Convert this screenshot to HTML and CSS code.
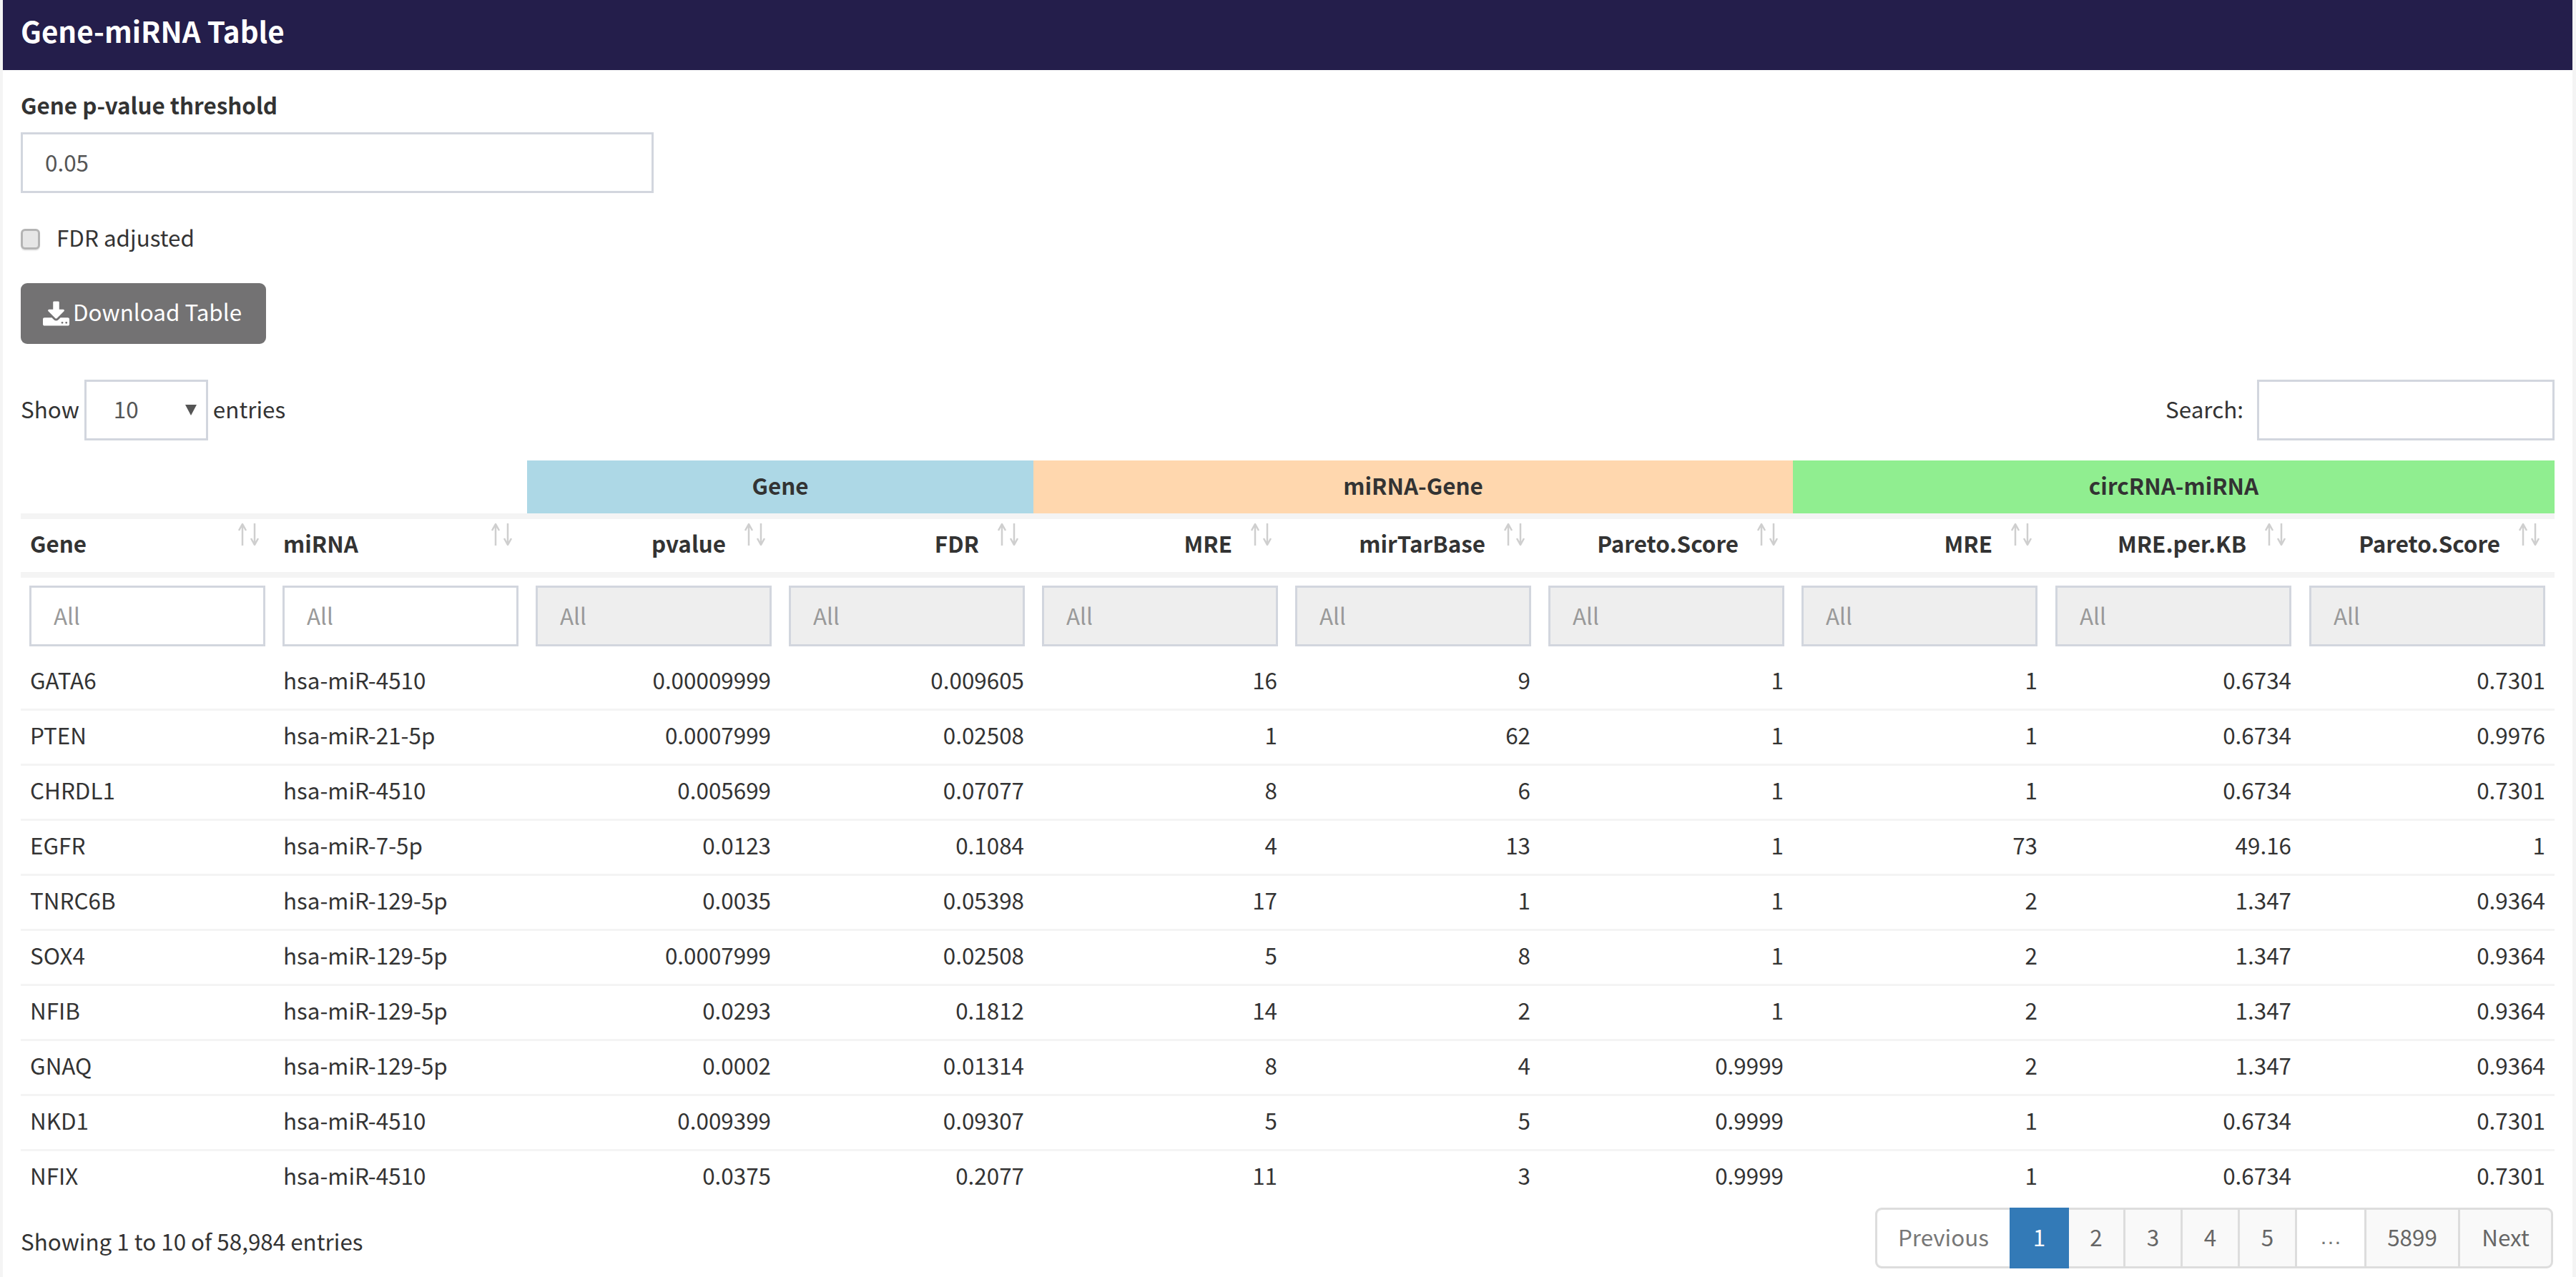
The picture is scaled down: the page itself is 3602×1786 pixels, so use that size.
FILE: index.html
```html
<!DOCTYPE html>
<html lang="en">
<head>
    <meta charset="UTF-8">
    <title>Gene-miRNA Table</title>
    <link rel="stylesheet" href="styles.css">
</head>
<body>
<div class="box">
    <div class="box-header">Gene-miRNA Table</div>
    <div class="box-body">
        <label class="field-label" for="threshold">Gene p-value threshold</label>
        <input class="form-input threshold" id="threshold" type="text" value="0.05">
        <label class="check-row"><input class="check" type="checkbox"><span class="check-text">FDR adjusted</span></label>
        <button class="download-btn">
            <svg class="download-icon" viewBox="64 0 1664 1536"><path fill="#fff" d="M1344 1344q0-26-19-45t-45-19-45 19-19 45 19 45 45 19 45-19 19-45zm256 0q0-26-19-45t-45-19-45 19-19 45 19 45 45 19 45-19 19-45zm128-224v320q0 40-28 68t-68 28h-1472q-40 0-68-28t-28-68v-320q0-40 28-68t68-28h465l135 136q58 56 136 56t136-56l136-136h464q40 0 68 28t28 68zm-325-569q17 41-14 70l-448 448q-18 19-45 19t-45-19l-448-448q-31-29-14-70 17-39 59-39h256v-448q0-26 19-45t45-19h256q26 0 45 19t19 45v448h256q42 0 59 39z"/></svg>
            Download Table
        </button>

        <div class="toolbar">
            <div class="length">
                <span class="toolbar-text">Show</span>
                <span class="select-wrap">
                    <select class="length-select"><option>10</option><option>25</option><option>50</option></select>
                </span>
                <span class="toolbar-text">entries</span>
            </div>
            <div class="search"><span class="toolbar-text">Search:</span> <input class="form-input search-input" type="search"></div>
        </div>

        <table class="data-table">
            <colgroup>
                <col class="col-a"><col class="col-a"><col class="col-a"><col class="col-a"><col class="col-a"><col class="col-a"><col class="col-a">
                <col class="col-b"><col class="col-b"><col class="col-b">
            </colgroup>
            <thead>
                <tr class="group-row">
                    <th colspan="2"></th>
                    <th colspan="2" class="group-gene">Gene</th>
                    <th colspan="3" class="group-mirna">miRNA-Gene</th>
                    <th colspan="3" class="group-circ">circRNA-miRNA</th>
                </tr>
                <tr class="head-row">
                    <th class="sort">Gene<svg class="sort-icon" viewBox="0 0 30 31"><path d="M6 31V1M1 10L6 1l5 9M23 0v30M18 21l5 9 5-9"/></svg></th>
                    <th class="sort">miRNA<svg class="sort-icon" viewBox="0 0 30 31"><path d="M6 31V1M1 10L6 1l5 9M23 0v30M18 21l5 9 5-9"/></svg></th>
                    <th class="sort num">pvalue<svg class="sort-icon" viewBox="0 0 30 31"><path d="M6 31V1M1 10L6 1l5 9M23 0v30M18 21l5 9 5-9"/></svg></th>
                    <th class="sort num">FDR<svg class="sort-icon" viewBox="0 0 30 31"><path d="M6 31V1M1 10L6 1l5 9M23 0v30M18 21l5 9 5-9"/></svg></th>
                    <th class="sort num">MRE<svg class="sort-icon" viewBox="0 0 30 31"><path d="M6 31V1M1 10L6 1l5 9M23 0v30M18 21l5 9 5-9"/></svg></th>
                    <th class="sort num">mirTarBase<svg class="sort-icon" viewBox="0 0 30 31"><path d="M6 31V1M1 10L6 1l5 9M23 0v30M18 21l5 9 5-9"/></svg></th>
                    <th class="sort num">Pareto.Score<svg class="sort-icon" viewBox="0 0 30 31"><path d="M6 31V1M1 10L6 1l5 9M23 0v30M18 21l5 9 5-9"/></svg></th>
                    <th class="sort num">MRE<svg class="sort-icon" viewBox="0 0 30 31"><path d="M6 31V1M1 10L6 1l5 9M23 0v30M18 21l5 9 5-9"/></svg></th>
                    <th class="sort num">MRE.per.KB<svg class="sort-icon" viewBox="0 0 30 31"><path d="M6 31V1M1 10L6 1l5 9M23 0v30M18 21l5 9 5-9"/></svg></th>
                    <th class="sort num">Pareto.Score<svg class="sort-icon" viewBox="0 0 30 31"><path d="M6 31V1M1 10L6 1l5 9M23 0v30M18 21l5 9 5-9"/></svg></th>
                </tr>
                <tr class="filter-row">
                    <td><input class="form-input filter" type="search" placeholder="All"></td>
                    <td><input class="form-input filter" type="search" placeholder="All"></td>
                    <td><input class="form-input filter" type="search" placeholder="All" disabled></td>
                    <td><input class="form-input filter" type="search" placeholder="All" disabled></td>
                    <td><input class="form-input filter" type="search" placeholder="All" disabled></td>
                    <td><input class="form-input filter" type="search" placeholder="All" disabled></td>
                    <td><input class="form-input filter" type="search" placeholder="All" disabled></td>
                    <td><input class="form-input filter" type="search" placeholder="All" disabled></td>
                    <td><input class="form-input filter" type="search" placeholder="All" disabled></td>
                    <td><input class="form-input filter" type="search" placeholder="All" disabled></td>
                </tr>
            </thead>
            <tbody>
                <tr><td>GATA6</td><td>hsa-miR-4510</td><td class="num">0.00009999</td><td class="num">0.009605</td><td class="num">16</td><td class="num">9</td><td class="num">1</td><td class="num">1</td><td class="num">0.6734</td><td class="num">0.7301</td></tr>
                <tr><td>PTEN</td><td>hsa-miR-21-5p</td><td class="num">0.0007999</td><td class="num">0.02508</td><td class="num">1</td><td class="num">62</td><td class="num">1</td><td class="num">1</td><td class="num">0.6734</td><td class="num">0.9976</td></tr>
                <tr><td>CHRDL1</td><td>hsa-miR-4510</td><td class="num">0.005699</td><td class="num">0.07077</td><td class="num">8</td><td class="num">6</td><td class="num">1</td><td class="num">1</td><td class="num">0.6734</td><td class="num">0.7301</td></tr>
                <tr><td>EGFR</td><td>hsa-miR-7-5p</td><td class="num">0.0123</td><td class="num">0.1084</td><td class="num">4</td><td class="num">13</td><td class="num">1</td><td class="num">73</td><td class="num">49.16</td><td class="num">1</td></tr>
                <tr><td>TNRC6B</td><td>hsa-miR-129-5p</td><td class="num">0.0035</td><td class="num">0.05398</td><td class="num">17</td><td class="num">1</td><td class="num">1</td><td class="num">2</td><td class="num">1.347</td><td class="num">0.9364</td></tr>
                <tr><td>SOX4</td><td>hsa-miR-129-5p</td><td class="num">0.0007999</td><td class="num">0.02508</td><td class="num">5</td><td class="num">8</td><td class="num">1</td><td class="num">2</td><td class="num">1.347</td><td class="num">0.9364</td></tr>
                <tr><td>NFIB</td><td>hsa-miR-129-5p</td><td class="num">0.0293</td><td class="num">0.1812</td><td class="num">14</td><td class="num">2</td><td class="num">1</td><td class="num">2</td><td class="num">1.347</td><td class="num">0.9364</td></tr>
                <tr><td>GNAQ</td><td>hsa-miR-129-5p</td><td class="num">0.0002</td><td class="num">0.01314</td><td class="num">8</td><td class="num">4</td><td class="num">0.9999</td><td class="num">2</td><td class="num">1.347</td><td class="num">0.9364</td></tr>
                <tr><td>NKD1</td><td>hsa-miR-4510</td><td class="num">0.009399</td><td class="num">0.09307</td><td class="num">5</td><td class="num">5</td><td class="num">0.9999</td><td class="num">1</td><td class="num">0.6734</td><td class="num">0.7301</td></tr>
                <tr><td>NFIX</td><td>hsa-miR-4510</td><td class="num">0.0375</td><td class="num">0.2077</td><td class="num">11</td><td class="num">3</td><td class="num">0.9999</td><td class="num">1</td><td class="num">0.6734</td><td class="num">0.7301</td></tr>
            </tbody>
        </table>

        <div class="table-footer">
            <div class="info">Showing 1 to 10 of 58,984 entries</div>
            <div class="pagination">
                <a class="page-link prev">Previous</a>
                <a class="page-link active">1</a>
                <a class="page-link">2</a>
                <a class="page-link">3</a>
                <a class="page-link">4</a>
                <a class="page-link">5</a>
                <a class="page-link ellipsis">…</a>
                <a class="page-link wide">5899</a>
                <a class="page-link next">Next</a>
            </div>
        </div>
    </div>
</div>
</body>
</html>
```

FILE: styles.css
```css
html, body {
    height: 100%;
}

body {
    margin: 0;
    background-color: #f4f4f4;
    font-family: "Noto Sans CJK SC", "Open Sans", sans-serif;
    font-size: 31.4px;
    line-height: 46px;
    color: #333;
}

.box {
    margin: 0 5px 0 4px;
    height: 1786px;
    background-color: #fff;
    overflow: hidden;
}

.box-header {
    height: 98px;
    padding-left: 25px;
    line-height: 86px;
    font-size: 40.3px;
    font-weight: 700;
    color: #fff;
    background-color: #241e4b;
}

.box-body {
    padding: 0 25px;
}

.field-label {
    display: block;
    margin-top: 26px;
    height: 46px;
    font-weight: 700;
}

.form-input {
    box-sizing: border-box;
    display: block;
    height: 85px;
    padding: 0 31px 2px;
    border: 3px solid #d2d6de;
    border-radius: 0;
    background-color: #fff;
    font: inherit;
    color: #555;
    outline: none;
}

.form-input::placeholder {
    color: #999;
    opacity: 1;
}

.form-input:disabled {
    background-color: #eee;
}

.threshold {
    width: 885px;
    margin-top: 15px;
}

.check-row {
    display: flex;
    align-items: center;
    gap: 23px;
    margin-top: 41px;
    height: 46px;
}

.check-text {
    padding-bottom: 4px;
}

.check {
    appearance: none;
    box-sizing: border-box;
    width: 27px;
    height: 29px;
    margin: 0;
    border: 3px solid #b4b4b4;
    border-radius: 6px;
    background-color: #e6e6e6;
    box-shadow: 0 2px 1px #ececec;
}

.download-btn {
    display: flex;
    align-items: center;
    gap: 5px;
    box-sizing: border-box;
    width: 343px;
    height: 85px;
    margin-top: 39px;
    padding: 0 0 5px 31px;
    border: none;
    border-radius: 9px;
    background-color: #737273;
    font: inherit;
    color: #fff;
}

.download-icon {
    width: 37px;
    height: 35px;
    margin-top: 5px;
}

.toolbar {
    display: flex;
    justify-content: space-between;
    align-items: center;
    margin-top: 50px;
}

.toolbar-text {
    padding-bottom: 4px;
}

.length {
    display: flex;
    align-items: center;
    gap: 7px;
}

.select-wrap {
    position: relative;
    display: block;
}

.select-wrap::after {
    content: "";
    position: absolute;
    top: 35px;
    right: 16px;
    border-left: 8px solid transparent;
    border-right: 8px solid transparent;
    border-top: 15px solid #555;
}

.length-select {
    appearance: none;
    display: block;
    box-sizing: border-box;
    width: 173px;
    height: 85px;
    padding: 0 0 4px 38px;
    border: 3px solid #d2d6de;
    border-radius: 0;
    background-color: #fff;
    font: inherit;
    color: #555;
}

.search {
    display: flex;
    align-items: center;
    gap: 19px;
}

.search-input {
    width: 416px;
}

.data-table {
    table-layout: fixed;
    width: 3543px;
    margin-top: 28px;
    border-collapse: separate;
    border-spacing: 0;
}

.col-a { width: 354px; }
.col-b { width: 355px; }

.data-table th,
.data-table td {
    box-sizing: border-box;
    padding: 0 13px;
    overflow: hidden;
    white-space: nowrap;
}

.group-row th {
    height: 74px;
    padding-bottom: 4px;
    text-align: center;
    font-weight: 700;
}

.group-gene { background-color: #add8e6; }
.group-mirna { background-color: #ffd7ae; }
.group-circ { background-color: #90ee90; }

.head-row th {
    position: relative;
    height: 90px;
    border-top: 8px solid #f4f4f4;
    border-bottom: 8px solid #f4f4f4;
    padding-right: 76px;
    padding-bottom: 7px;
    text-align: left;
    font-weight: 700;
}

.head-row th.num {
    text-align: right;
}

.sort-icon {
    position: absolute;
    top: 6px;
    right: 20px;
    width: 30px;
    height: 31px;
    fill: none;
    stroke: #cfcfcf;
    stroke-width: 2.5;
}

.data-table .filter-row td {
    height: 109px;
    padding: 0 0 2px 12px;
}

.filter {
    width: 329.5px;
}

.data-table tbody td {
    height: 77px;
    border-bottom: 3px solid #f4f4f4;
    padding-bottom: 7px;
}

.data-table tbody tr:last-child td {
    border-bottom: none;
    padding-bottom: 10px;
}

.data-table .num {
    text-align: right;
}

.table-footer {
    display: flex;
    justify-content: space-between;
    align-items: center;
    margin-top: 2px;
}

.info {
    padding-top: 8px;
}

.pagination {
    display: flex;
    box-sizing: border-box;
    width: 948px;
    height: 85px;
    margin-right: 2px;
    border: 3px solid #ddd;
    border-radius: 9px;
    color: #666;
    background-color: #f9f9f9;
}

.page-link {
    display: flex;
    align-items: center;
    justify-content: center;
    box-sizing: border-box;
    width: 80px;
    padding-bottom: 4px;
    border-right: 3px solid #ddd;
}

.prev {
    width: 185px;
    border-right: none;
    border-radius: 9px 0 0 9px;
    background-color: #fff;
    color: #777;
}

.active {
    width: 83px;
    margin: -3px 0;
    border-right: none;
    background-color: #337ab7;
    color: #fff;
}

.active + .page-link {
    width: 79px;
}

.ellipsis {
    width: 97px;
    background-color: #fff;
    color: #777;
    font-family: "Liberation Sans", sans-serif;
}

.wide {
    width: 131px;
}

.next {
    flex: 1;
    border-right: none;
    border-radius: 0 9px 9px 0;
}
```
